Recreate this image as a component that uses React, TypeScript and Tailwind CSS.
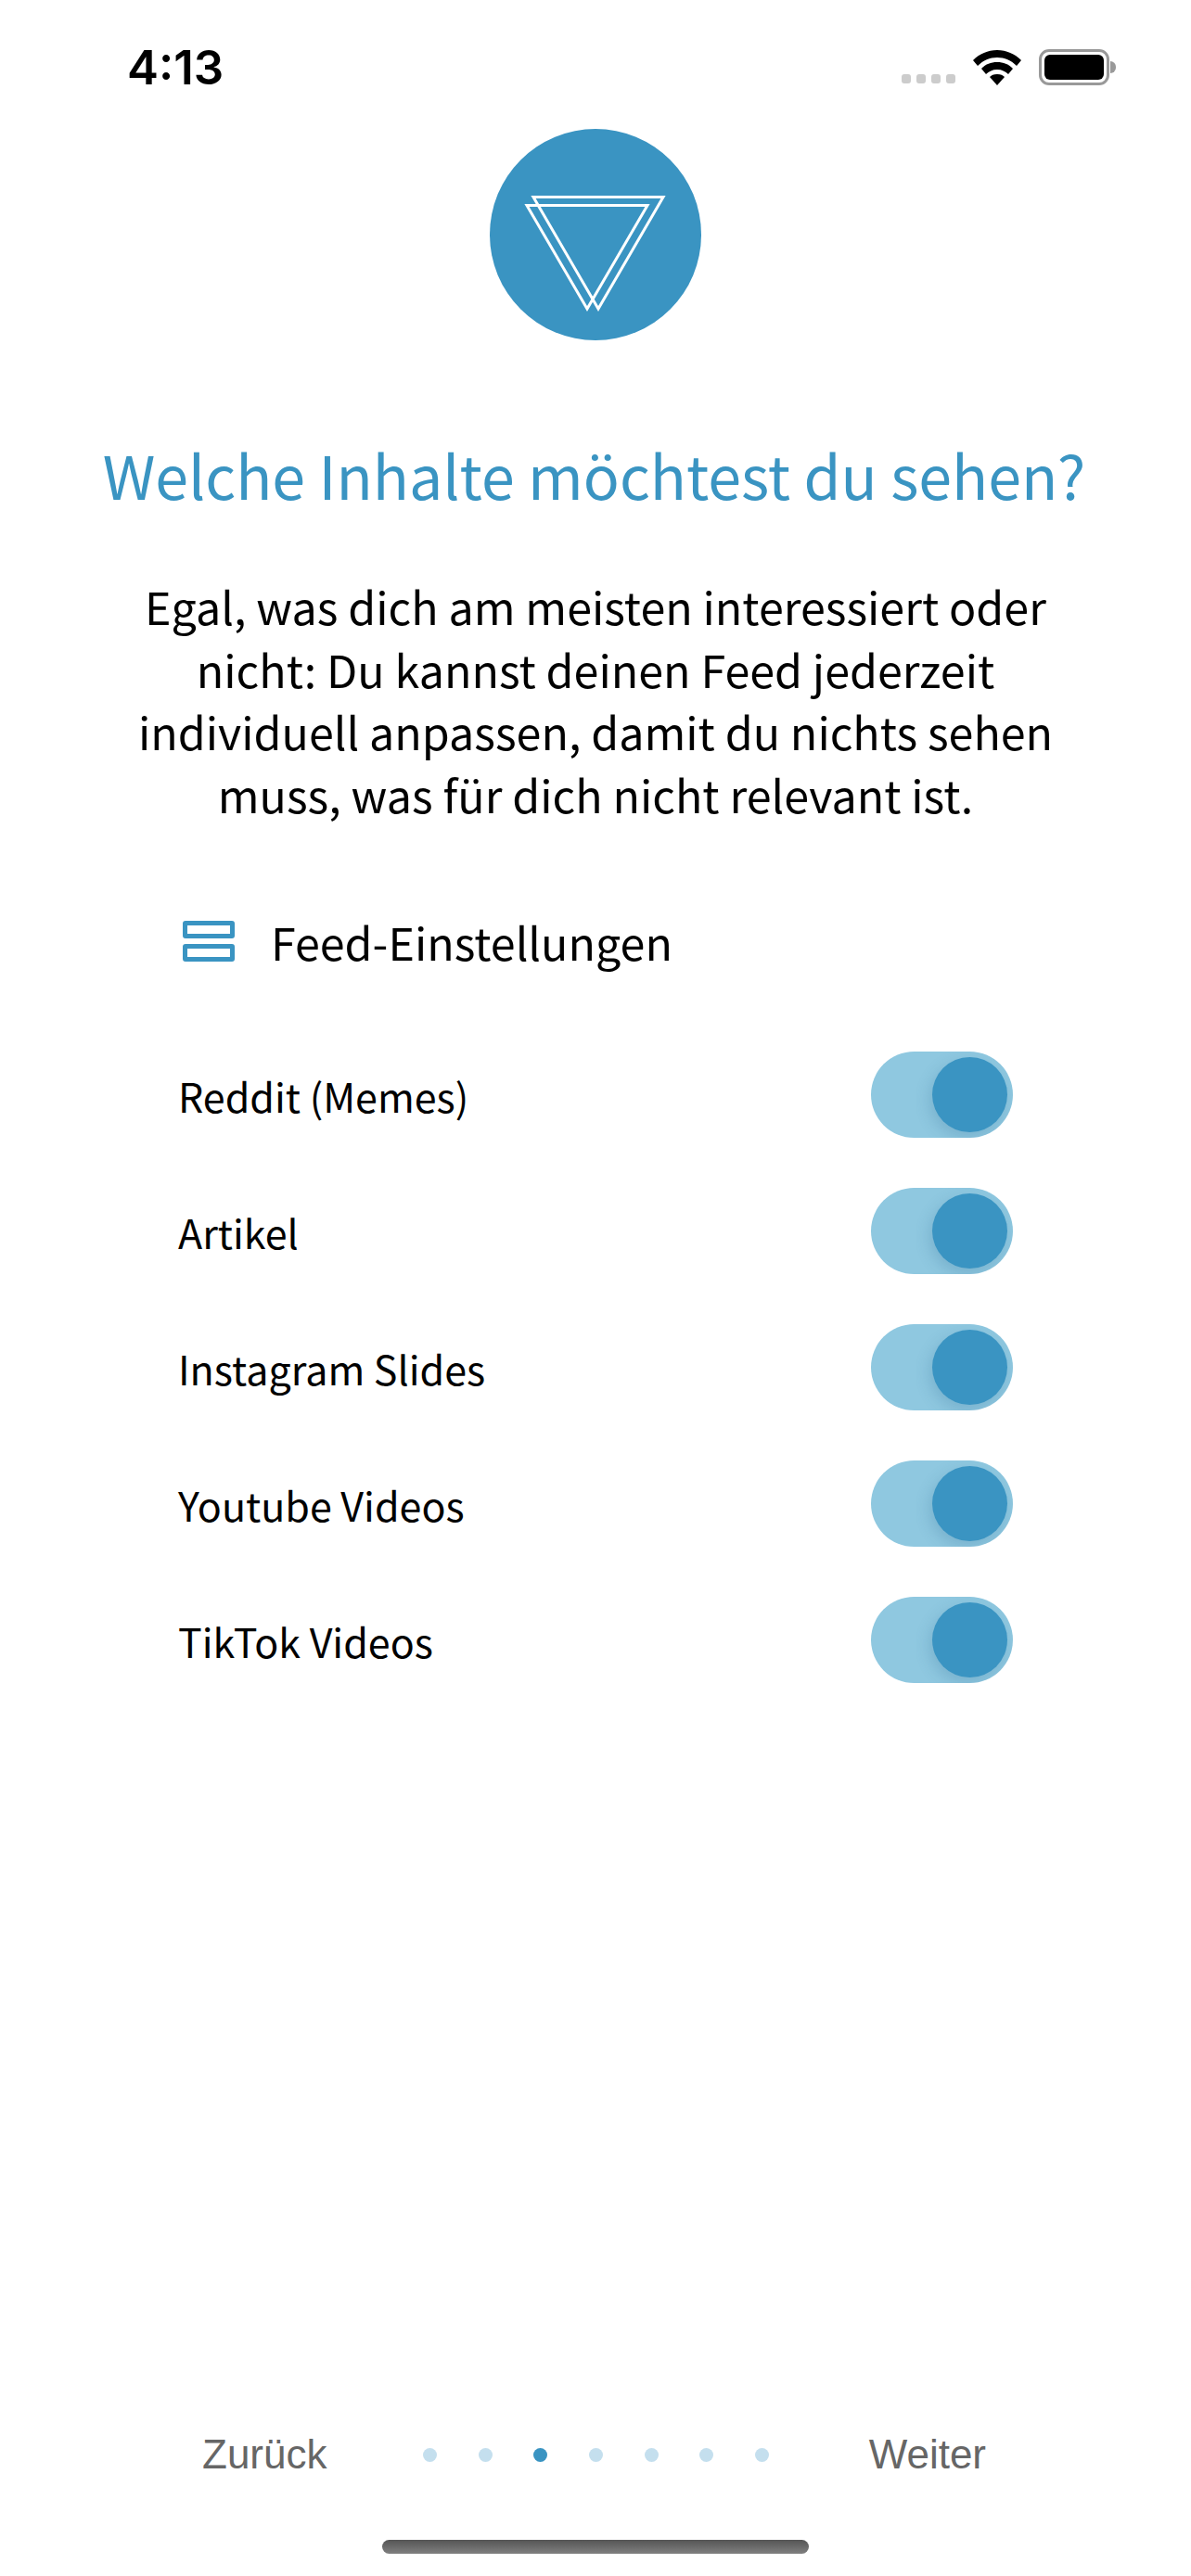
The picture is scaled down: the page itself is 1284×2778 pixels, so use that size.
const rows = ['Reddit (Memes)', 'Artikel', 'Instagram Slides', 'Youtube Videos', 'TikTok Videos'];
const pages = [0, 1, 2, 3, 4, 5, 6];

function Toggle() {
  return (
    <div className="flex h-[93px] w-[153px] items-center justify-end overflow-hidden rounded-full bg-[#8fc8e0] pr-[6px]">
      <div className="h-[81px] w-[81px] rounded-full bg-[#3a94c2] shadow-[-3px_6px_16px_rgba(40,100,140,0.22)]" />
    </div>
  );
}

export default function App() {
  return (
    <div className="flex h-[2778px] w-[1284px] flex-col items-center bg-white font-['Noto_Sans_CJK_SC',sans-serif] text-black">
      {/* Status bar */}
      <div className="flex h-[139px] w-full items-start justify-between pl-[137px] pr-[81px] pt-[46px]">
        <span className="font-['Inter',sans-serif] text-[51px] leading-[54px] font-semibold">4:13</span>
        <div className="flex items-end pt-[7px]">
          <div className="mb-[2px] flex gap-[6px]">
            <span className="h-[10px] w-[10px] rounded-[3px] bg-[#cccccc]" />
            <span className="h-[10px] w-[10px] rounded-[3px] bg-[#cccccc]" />
            <span className="h-[10px] w-[10px] rounded-[3px] bg-[#cccccc]" />
            <span className="h-[10px] w-[10px] rounded-[3px] bg-[#cccccc]" />
          </div>
          <svg className="ml-[19px] h-[38px] w-[52px]" viewBox="0 0 52 38">
            <path d="M26 0C16 0 7 4 0 11l5 6c6-6 13-9 21-9s15 3 21 9l5-6C45 4 36 0 26 0z" />
            <path d="M26 13c-7 0-12 2-17 7l5 6c3-3 7-5 12-5s9 2 12 5l5-6c-5-5-10-7-17-7z" />
            <path d="M26 26c-4 0-6 1-8 3l8 9 8-9c-2-2-4-3-8-3z" />
          </svg>
          <div className="ml-[19px] flex items-center">
            <div className="h-[39px] w-[76px] rounded-[11px] border-[3px] border-[#999999] p-[3px]">
              <div className="h-full w-full rounded-[6px] bg-black" />
            </div>
            <div className="ml-[1px] h-[13px] w-[6px] rounded-r-full bg-[#999999]" />
          </div>
        </div>
      </div>

      {/* Logo */}
      <div className="flex h-[228px] w-[228px] items-center justify-center rounded-full bg-[#3a94c2]">
        <svg className="h-[228px] w-[228px]" viewBox="528 139 228 228" fill="none" stroke="white" strokeWidth="3">
          <path d="M575 212.5H715L645 333Z" />
          <path d="M568 221.5H698L633 333Z" />
        </svg>
      </div>

      {/* Heading */}
      <h1 className="mt-[107px] mr-[3px] text-[64.5px] leading-[74px] font-normal whitespace-nowrap text-[#3a94c2]">
        Welche Inhalte möchtest du sehen?
      </h1>
      <p className="mt-[72px] w-[1040px] text-center text-[48.4px] leading-[67.5px]">
        Egal, was dich am meisten interessiert oder nicht: Du kannst deinen Feed jederzeit individuell anpassen, damit du nichts sehen muss, was für dich nicht relevant ist.
      </p>

      {/* Feed settings */}
      <div className="mt-[90px] flex w-full flex-col pl-[192px] pr-[192px]">
        <div className="flex h-[70px] items-center pl-[5px]">
          <div className="flex w-[56px] flex-col gap-[6px]">
            <div className="h-[19px] rounded-[3px] border-[5px] border-[#3a94c2]" />
            <div className="h-[19px] rounded-[3px] border-[5px] border-[#3a94c2]" />
          </div>
          <span className="ml-[39px] text-[48.4px] leading-[70px]">Feed-Einstellungen</span>
        </div>
        <div className="mt-[84px] flex flex-col gap-[54px]">
          {rows.map((row) => (
            <div key={row} className="flex items-center justify-between">
              <span className="text-[43px] leading-[60px]">{row}</span>
              <Toggle />
            </div>
          ))}
        </div>
      </div>

      {/* Footer nav */}
      <div className="mt-auto flex w-full items-center justify-between pl-[218px] pr-[221px]">
        <span className="font-['Liberation_Sans',sans-serif] text-[44px] leading-[50px] text-[#666666]">Zurück</span>
        <div className="mr-[4px] flex gap-[44.6px]">
          {pages.map((p) => (
            <span key={p} className={p === 2 ? 'h-[15px] w-[15px] rounded-full bg-[#3a94c2]' : 'h-[15px] w-[15px] rounded-full bg-[#c4dfee]'} />
          ))}
        </div>
        <span className="font-['Liberation_Sans',sans-serif] text-[44px] leading-[50px] text-[#666666]">Weiter</span>
      </div>
      <div className="mt-[67px] mb-[24px] h-[15px] w-[460px] rounded-full bg-gradient-to-b from-[#555555] to-[#808080]" />
    </div>
  );
}
